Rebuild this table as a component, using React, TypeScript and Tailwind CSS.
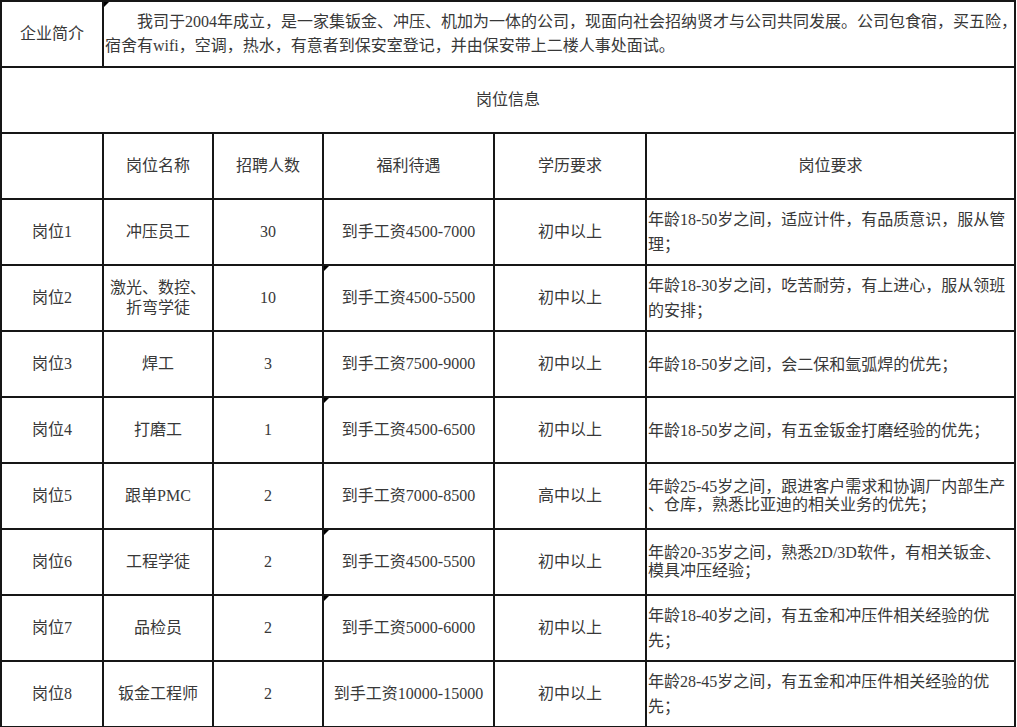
import React from "react";

const font = { fontFamily: '"Liberation Serif", "Noto Sans CJK SC", serif' };

type Row = {
  id: string;
  name: string[];
  count: string;
  pay: string;
  edu: string;
  req: string[];
  mark?: boolean;
  tight?: boolean;
};

const rows: Row[] = [
  { id: "岗位1", name: ["冲压员工"], count: "30", pay: "到手工资4500-7000", edu: "初中以上", req: ["年龄18-50岁之间，适应计件，有品质意识，服从管", "理；"] },
  { id: "岗位2", name: ["激光、数控、", "折弯学徒"], count: "10", pay: "到手工资4500-5500", edu: "初中以上", req: ["年龄18-30岁之间，吃苦耐劳，有上进心，服从领班", "的安排；"], mark: true },
  { id: "岗位3", name: ["焊工"], count: "3", pay: "到手工资7500-9000", edu: "初中以上", req: ["年龄18-50岁之间，会二保和氩弧焊的优先；"] },
  { id: "岗位4", name: ["打磨工"], count: "1", pay: "到手工资4500-6500", edu: "初中以上", req: ["年龄18-50岁之间，有五金钣金打磨经验的优先；"], mark: true },
  { id: "岗位5", name: ["跟单PMC"], count: "2", pay: "到手工资7000-8500", edu: "高中以上", req: ["年龄25-45岁之间，跟进客户需求和协调厂内部生产", "、仓库，熟悉比亚迪的相关业务的优先；"], tight: true },
  { id: "岗位6", name: ["工程学徒"], count: "2", pay: "到手工资4500-5500", edu: "初中以上", req: ["年龄20-35岁之间，熟悉2D/3D软件，有相关钣金、", "模具冲压经验；"], mark: true, tight: true },
  { id: "岗位7", name: ["品检员"], count: "2", pay: "到手工资5000-6000", edu: "初中以上", req: ["年龄18-40岁之间，有五金和冲压件相关经验的优", "先；"], mark: true },
  { id: "岗位8", name: ["钣金工程师"], count: "2", pay: "到手工资10000-15000", edu: "初中以上", req: ["年龄28-45岁之间，有五金和冲压件相关经验的优", "先；"] },
];

function Mark() {
  return (
    <span className="absolute left-0 top-0 h-0 w-0 border-t-[5px] border-r-[5px] border-t-black border-r-transparent" />
  );
}

const td = "border-2 border-[#161616] text-center align-middle p-0";

export default function App() {
  return (
    <div className="h-[727px] w-[1017px] overflow-hidden bg-white text-[16px] text-[#383838]" style={font}>
      <table className="table-fixed border-collapse" style={{ width: 1014 }}>
        <colgroup>
          <col style={{ width: 102 }} />
          <col style={{ width: 110 }} />
          <col style={{ width: 110 }} />
          <col style={{ width: 171 }} />
          <col style={{ width: 152 }} />
          <col style={{ width: 369 }} />
        </colgroup>
        <tbody>
          <tr className="h-[66px]">
            <td className={td}>企业简介</td>
            <td colSpan={5} className={`${td} relative text-left leading-[24px]`}>
              <Mark />
              <div className="whitespace-nowrap pl-[1px] indent-[2em]">
                我司于2004年成立，是一家集钣金、冲压、机加为一体的公司，现面向社会招纳贤才与公司共同发展。公司包食宿，买五险，
              </div>
              <div className="whitespace-nowrap pl-[1px]">
                宿舍有wifi，空调，热水，有意者到保安室登记，并由保安带上二楼人事处面试。
              </div>
            </td>
          </tr>
          <tr className="h-[66px]">
            <td colSpan={6} className={td}>岗位信息</td>
          </tr>
          <tr className="h-[66px]">
            <td className={td}></td>
            <td className={td}>岗位名称</td>
            <td className={td}>招聘人数</td>
            <td className={td}>福利待遇</td>
            <td className={td}>学历要求</td>
            <td className={td}>岗位要求</td>
          </tr>
          {rows.map((r) => (
            <tr key={r.id} className="h-[66px]">
              <td className={td}>{r.id}</td>
              <td className={`${td} leading-[20px]`}>
                {r.name.map((n) => (
                  <div key={n}>{n}</div>
                ))}
              </td>
              <td className={td}>{r.count}</td>
              <td className={`${td} relative whitespace-nowrap`}>
                {r.mark && <Mark />}
                {r.pay}
              </td>
              <td className={td}>{r.edu}</td>
              <td className={`${td} text-left ${r.tight ? "leading-[18px]" : "leading-[25px]"}`}>
                {r.req.map((q) => (
                  <div key={q} className="whitespace-nowrap pl-[1px]">
                    {q}
                  </div>
                ))}
              </td>
            </tr>
          ))}
        </tbody>
      </table>
    </div>
  );
}
